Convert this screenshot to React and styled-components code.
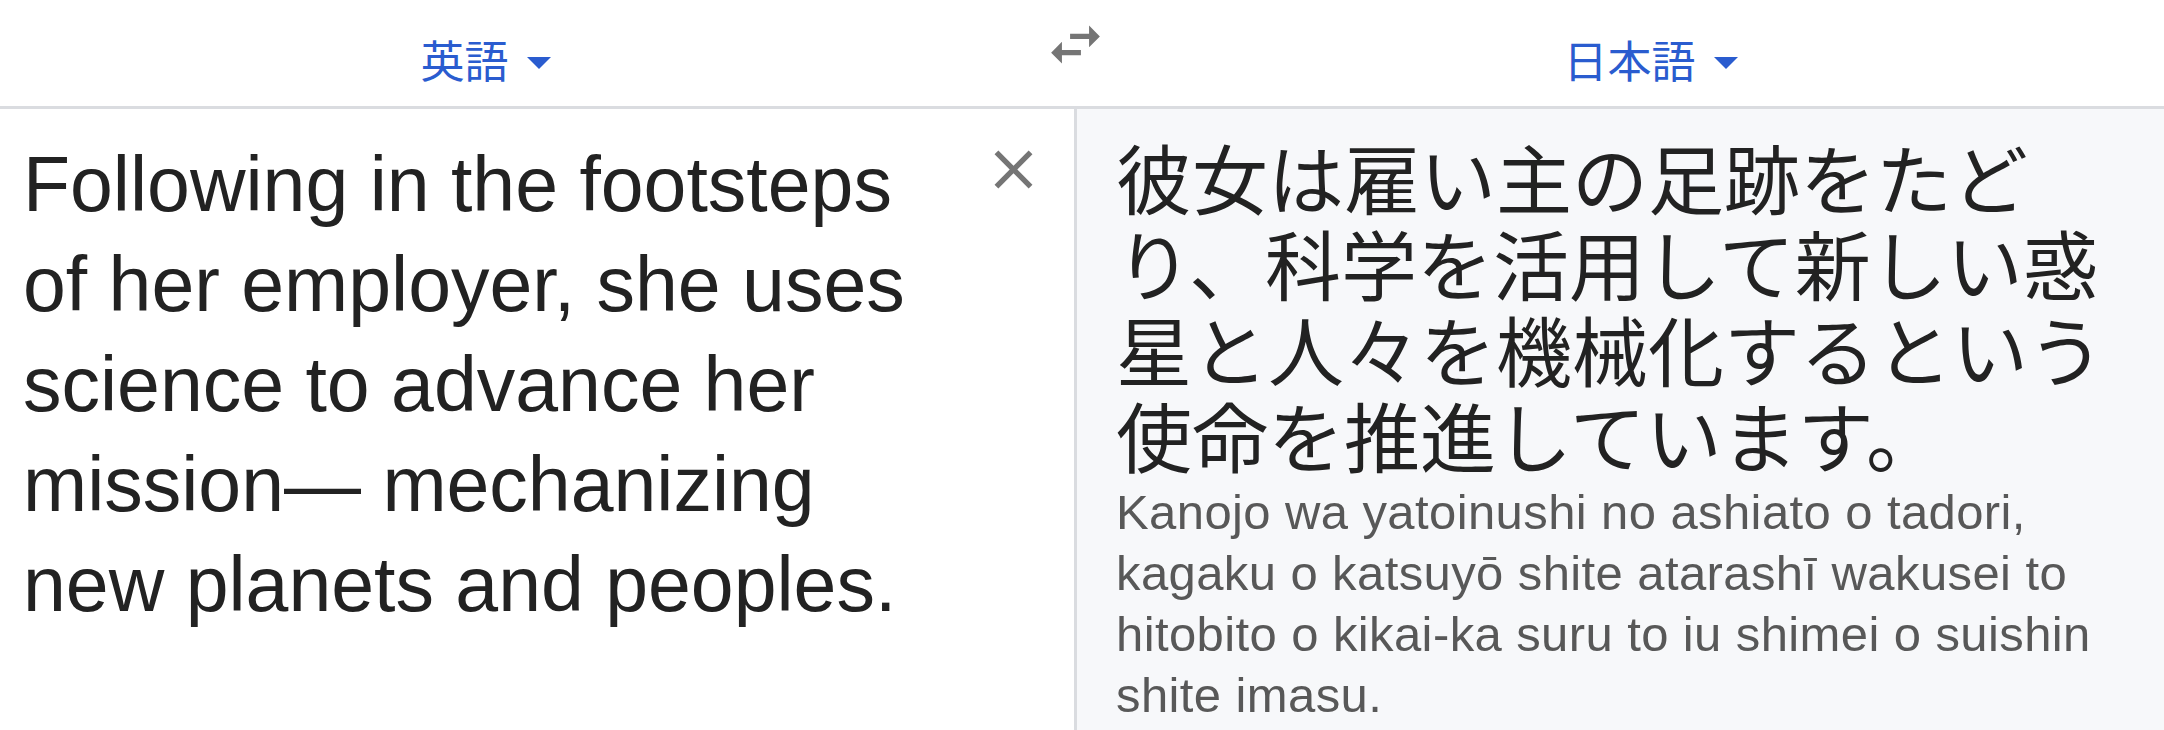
import React from 'react'
import styled, { createGlobalStyle } from 'styled-components'

const GlobalStyle = createGlobalStyle`
   html, body {
      margin: 0;
      padding: 0;
      background: #fff;
   }
   body {
      font-family: "Liberation Sans", Arial, sans-serif;
   }
`;

const languages = { source: '英語', target: '日本語' };

const sourceText =
   'Following in the footsteps of her employer, she uses science to advance her mission— mechanizing new planets and peoples.';

const translatedText =
   '彼女は雇い主の足跡をたどり、科学を活用して新しい惑星と人々を機械化するという使命を推進しています。';

const romanized =
   'Kanojo wa yatoinushi no ashiato o tadori, kagaku o katsuyō shite atarashī wakusei to hitobito o kikai-ka suru to iu shimei o suishin shite imasu.';

function SwapIcon() {
   return (
      <svg width="65" height="65" viewBox="0 0 24 24" fill="#757575">
         <path d="M6.99 11L3 15l3.99 4v-3H14v-2H6.99v-3zM21 9l-3.99-4v3H10v2h7.01v3L21 9z" />
      </svg>
   )
}

function CloseIcon() {
   return (
      <svg width="65" height="65" viewBox="0 0 24 24" fill="#757575">
         <path d="M19 6.41L17.59 5 12 10.59 6.41 5 5 6.41 10.59 12 5 17.59 6.41 19 12 13.41 17.59 19 19 17.59 13.41 12z" />
      </svg>
   )
}

function LanguagePicker({ label }) {
   return (
      <PickerButton>
         <span>{label}</span>
         <Caret />
      </PickerButton>
   )
}

function App() {
   return (
      <>
         <GlobalStyle />
         <Screen>
            <Header>
               <HeaderCell>
                  <LanguagePicker label={languages.source} />
               </HeaderCell>
               <SwapCell>
                  <SwapButton aria-label="swap languages">
                     <SwapIcon />
                  </SwapButton>
               </SwapCell>
               <HeaderCell>
                  <LanguagePicker label={languages.target} />
               </HeaderCell>
            </Header>
            <Panels>
               <SourcePanel>
                  <SourceText>{sourceText}</SourceText>
                  <ClearButton aria-label="clear">
                     <CloseIcon />
                  </ClearButton>
               </SourcePanel>
               <TargetPanel>
                  <TranslatedText lang="ja">{translatedText}</TranslatedText>
                  <Romanization>{romanized}</Romanization>
               </TargetPanel>
            </Panels>
         </Screen>
      </>
   )
}

const Screen = styled.div`
   display: flex;
   flex-direction: column;
   width: 100%;
   height: 100vh;
   overflow: hidden;
`;

const Header = styled.header`
   display: grid;
   grid-template-columns: 971px 209px 941px;
   height: 106px;
   border-bottom: 3px solid #dadce0;
   flex-shrink: 0;
`;

const HeaderCell = styled.div`
   display: flex;
   align-items: center;
   justify-content: center;
   padding-top: 12px;
`;

const SwapCell = styled.div`
   display: flex;
   justify-content: center;
   align-items: flex-start;
   padding-top: 12px;
`;

const SwapButton = styled.button`
   display: flex;
   padding: 0;
   border: none;
   background: none;
`;

const PickerButton = styled.button`
   display: flex;
   align-items: center;
   gap: 18px;
   padding: 0;
   border: none;
   background: none;
   color: #2a5ccf;
   font-family: "Noto Sans CJK JP", sans-serif;
   font-size: 44px;
   line-height: 1;
`;

const Caret = styled.span`
   width: 0;
   height: 0;
   margin-top: 8px;
   border-left: 12px solid transparent;
   border-right: 12px solid transparent;
   border-top: 12px solid #2a5ccf;
`;

const Panels = styled.main`
   flex: 1;
   display: grid;
   grid-template-columns: 1074px 1fr;
`;

const SourcePanel = styled.section`
   display: flex;
   align-items: flex-start;
   gap: 48px;
   padding: 25px 28px 0 23px;
   background: #fff;
`;

const SourceText = styled.p`
   flex: 1;
   margin: 0;
   color: #222;
   font-family: "Liberation Sans", Arial, sans-serif;
   font-size: 77px;
   line-height: 100px;
`;

const ClearButton = styled.button`
   display: flex;
   flex-shrink: 0;
   margin-top: 3px;
   padding: 0;
   border: none;
   background: none;
`;

const TargetPanel = styled.section`
   padding: 24px 24px 0 39px;
   background: #f7f8fa;
   border-left: 3px solid #dadce0;
`;

const TranslatedText = styled.p`
   margin: 0;
   color: #222;
   font-family: "Noto Sans CJK JP", sans-serif;
   font-size: 76px;
   line-height: 86px;
`;

const Romanization = styled.p`
   margin: 5px 0 0;
   color: #585858;
   font-family: "Liberation Sans", Arial, sans-serif;
   font-size: 49px;
   line-height: 61px;
   letter-spacing: 0.4px;
`;

export default App
